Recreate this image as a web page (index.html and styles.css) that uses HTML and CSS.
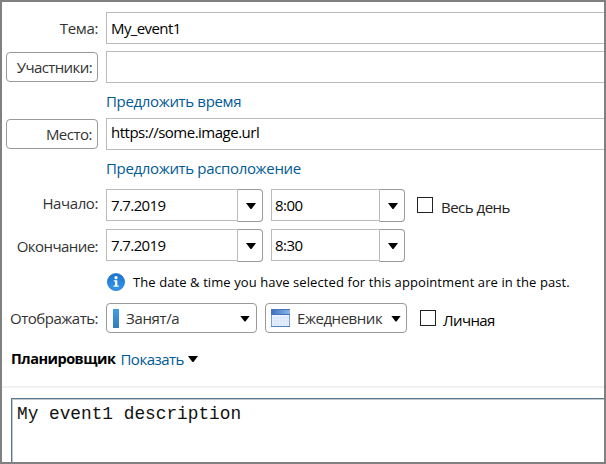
FILE: index.html
```
<!DOCTYPE html>
<html lang="ru">
<head>
<meta charset="utf-8">
<title>Событие</title>
<link rel="stylesheet" href="styles.css">
</head>
<body>
<main class="window">
  <form class="form">
    <div class="row subject">
      <span class="label t-tema">Тема:</span>
      <div class="field wide">My_event1</div>
    </div>
    <div class="row people">
      <span class="label button t-people">Участники:</span>
      <div class="field wide"></div>
    </div>
    <div class="row hint"><a class="link">Предложить время</a></div>
    <div class="row place">
      <span class="label button t-place">Место:</span>
      <div class="field wide url">https://some.image.url</div>
    </div>
    <div class="row hint second"><a class="link">Предложить расположение</a></div>
    <div class="row date">
      <span class="label t-start">Начало:</span>
      <div class="combo day"><div class="field">7.7.2019</div><span class="drop"><i class="arrow"></i></span></div>
      <div class="combo time"><div class="field">8:00</div><span class="drop"><i class="arrow"></i></span></div>
      <span class="check allday"><i class="box"></i><span>Весь день</span></span>
    </div>
    <div class="row date">
      <span class="label t-end">Окончание:</span>
      <div class="combo day"><div class="field">7.7.2019</div><span class="drop"><i class="arrow"></i></span></div>
      <div class="combo time"><div class="field">8:30</div><span class="drop"><i class="arrow"></i></span></div>
    </div>
    <div class="row notice">
      <svg class="info" width="18" height="18" viewBox="0 0 18 18">
        <defs><linearGradient id="blue" x2="0" y2="1"><stop stop-color="#1a72cc"/><stop offset="1" stop-color="#3298f2"/></linearGradient></defs>
        <circle cx="9" cy="9" r="8.6" fill="url(#blue)" stroke="#1d70c4" stroke-width=".7"/>
        <circle cx="9" cy="4.7" r="1.6" fill="#fff"/>
        <path d="M6.7 7.2h3.6v5.3h1.4v1.3H6.5v-1.3H8V8.5H6.7z" fill="#fff"/>
      </svg>
      <span>The date &amp; time you have selected for this appointment are in the past.</span>
    </div>
    <div class="row show">
      <span class="label t-show">Отображать:</span>
      <div class="select busy"><i class="bar"></i><span>Занят/а</span><i class="arrow"></i></div>
      <div class="select calendar">
        <svg width="19" height="18" viewBox="0 0 19 18">
          <defs><linearGradient id="head"><stop stop-color="#3d6dbb"/><stop offset="1" stop-color="#8cb7ec"/></linearGradient></defs>
          <rect x=".5" y=".5" width="18" height="17" fill="#eaf2fd" stroke="#7d9dcb"/>
          <path d="M4 7v10M7 7v10M10 7v10M13 7v10M16 7v10M1 9h17M1 12h17M1 15h17" stroke="#cfdff6" stroke-width=".7"/>
          <path d="M0 0h19v6H0z" fill="url(#head)"/>
          <path d="M0 .5h19M0 5.5h19" stroke="#4474bd"/>
          <path d="M0 17.5h19" stroke="#527fbc"/>
        </svg>
        <span>Ежедневник</span><i class="arrow"></i>
      </div>
      <span class="check private"><i class="box"></i><span>Личная</span></span>
    </div>
    <div class="planner"><b>Планировщик</b><a class="link">Показать</a><i class="arrow"></i></div>
  </form>
  <section class="editor">My event1 description</section>
</main>
</body>
</html>
```
FILE: styles.css
```
* { box-sizing: border-box; }
body { margin: 0; background: #fff; }
.window {
  width: 606px; height: 464px; overflow: hidden;
  display: flex; flex-direction: column;
  border: 2px solid #808080;
  font: 15px/20px "Open Sans", "Noto Sans", sans-serif;
  color: #333;
}
.form { padding-top: 10px; height: 386px; flex: none; border-bottom: 2px solid #f0f0f0; }
.row { display: flex; align-items: flex-start; white-space: nowrap; }
.label { width: 92px; margin: 6px 8px 0 4px; text-align: right; flex: none; letter-spacing: -.4px; }
.button { height: 30px; margin-top: 0; padding: 4px 5px 0 0; border: 1px solid #999; border-radius: 4px; }
.t-tema { letter-spacing: -.35px; }
.t-people { letter-spacing: -.6px; }
.t-place { letter-spacing: -.5px; }
.t-show { letter-spacing: -.5px; }
.t-end { letter-spacing: -.55px; }
.field {
  height: 32px; padding: 5px 4px; border: 1px solid #bbb; color: #000; letter-spacing: -.6px;
}
.wide { flex: 1; border-right: 0; }
.subject, .people { height: 39px; }
.url { padding-top: 3px; letter-spacing: -.5px; }
.people .button, .place .button { margin-top: 1px; }
.hint { height: 28px; padding: 1px 0 0 104px; }
.place { height: 32px; }
.hint.second { height: 39px; padding-top: 8px; }
.link { color: #005a95; letter-spacing: -.34px; }
.row.hint .link { display: block; }
.date { height: 40px; }
.date .label { margin-top: 4px; }
.date .t-end { margin-top: 7px; }
.combo { display: flex; }
.combo .field { border-right: 0; }
.day { width: 157px; margin-right: 8px; }
.day .field { width: 131px; }
.time { width: 134px; }
.time .field { width: 108px; padding-left: 3px; letter-spacing: -.5px; }
.drop {
  width: 26px; height: 33px; display: flex; align-items: center; justify-content: center;
  border: 1px solid #999; border-left-color: #bbb; border-radius: 0 4px 4px 0;
}
.arrow { width: 10px; height: 6px; background: #000; clip-path: polygon(0 0, 100% 0, 55% 100%, 45% 100%); flex: none; }
.drop .arrow { margin: 1px 0 0 2px; }
.check { display: flex; color: #222; letter-spacing: -.5px; }
.box { width: 16px; height: 16px; border: 1px solid #222; }
.allday { margin: 8px 0 0 12px; gap: 8px; }
.notice { height: 34px; padding: 4px 0 0 105px; gap: 8px; font-size: 13px; letter-spacing: .09px; color: #000; }
.info { flex: none; }
.notice span { margin-top: -1px; }
.show .label { margin-top: 5px; }
.select { height: 30px; display: flex; align-items: center; border: 1px solid #999; border-radius: 4px; }
.busy { width: 151px; margin-right: 8px; padding: 0 6px 0 6px; letter-spacing: -.35px; }
.bar { width: 6px; height: 19px; margin-right: 7px; background: linear-gradient(#3e9fe8, #337cb7); }
.busy .arrow { margin: 1px 0 0 auto; }
.calendar { width: 142px; padding: 0 5px; letter-spacing: -.45px; }
.calendar svg { margin-right: 7px; }
.calendar .arrow { margin: 1px 0 0 auto; }
.private { margin: 7px 0 0 13px; gap: 7px; color: #000; letter-spacing: -.6px; }
.planner { display: flex; align-items: center; padding: 16px 0 0 9px; }
.planner b { font-size: 14.5px; letter-spacing: -.5px; color: #000; }
.planner .link { margin-left: 5px; letter-spacing: -.5px; }
.planner .arrow { margin: 0 0 0 4px; }
.editor {
  flex: 1; margin: 10px 0 0 9px; padding: 4px 5px;
  border: solid #567891; border-width: 1px 0 0 1px;
  box-shadow: inset 1px 1px #c4c9c9;
  font: 17.8px/22px "Liberation Mono", monospace; color: #111;
}
```
